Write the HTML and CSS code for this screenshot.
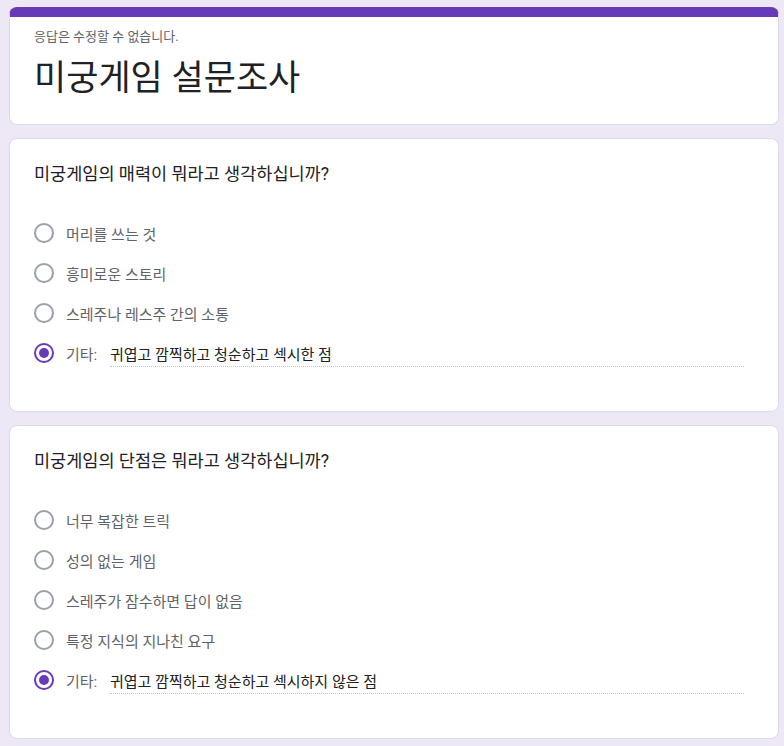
FILE: index.html
```html
<!DOCTYPE html>
<html lang="ko">

<head>
    <meta charset="UTF-8">
    <meta name="viewport" content="width=device-width, initial-scale=1.0">
    <title>미궁게임 설문조사</title>
    <link rel="stylesheet" href="styles.css">
</head>

<body>
    <main class="form">
        <section class="card head-card">
            <p class="notice">응답은 수정할 수 없습니다.</p>
            <h1>미궁게임 설문조사</h1>
        </section>

        <section class="card">
            <h2>미궁게임의 매력이 뭐라고 생각하십니까?</h2>
            <ul class="options">
                <li><span class="radio"></span>머리를 쓰는 것</li>
                <li><span class="radio"></span>흥미로운 스토리</li>
                <li><span class="radio"></span>스레주나 레스주 간의 소통</li>
                <li class="other"><span class="radio checked"></span><span class="other-label">기타:</span><span class="other-input">귀엽고 깜찍하고 청순하고 섹시한 점</span></li>
            </ul>
        </section>

        <section class="card">
            <h2>미궁게임의 단점은 뭐라고 생각하십니까?</h2>
            <ul class="options">
                <li><span class="radio"></span>너무 복잡한 트릭</li>
                <li><span class="radio"></span>성의 없는 게임</li>
                <li><span class="radio"></span>스레주가 잠수하면 답이 없음</li>
                <li><span class="radio"></span>특정 지식의 지나친 요구</li>
                <li class="other"><span class="radio checked"></span><span class="other-label">기타:</span><span class="other-input">귀엽고 깜찍하고 청순하고 섹시하지 않은 점</span></li>
            </ul>
        </section>
    </main>
</body>

</html>
```

FILE: styles.css
```css
body {
    margin: 0;
    padding: 0;
    background-color: #ede7f6;
    font-family: Roboto, "Noto Sans CJK KR", sans-serif;
    color: #202124;
}

.form {
    width: 770px;
    padding: 7px 0 0 9px;
    display: flex;
    flex-direction: column;
    gap: 13px;
}

.card {
    background-color: #fff;
    border: 1px solid #dadce0;
    border-radius: 8px;
    padding: 23px 24px 38px 24px;
}

.head-card {
    border-top: 10px solid #673ab7;
    padding-top: 12px;
    padding-bottom: 25px;
}

.notice {
    margin: 0;
    font-size: 13px;
    line-height: 16px;
    color: #5f6368;
}

.head-card h1 {
    margin: 14px 0 0 0;
    font-size: 35px;
    font-weight: 400;
    line-height: 40px;
}

.card h2 {
    margin: 0;
    font-size: 17.5px;
    font-weight: 400;
    line-height: 24px;
}

.options {
    list-style-type: none;
    margin: 27px 0 0 0;
    padding: 0;
}

.options li {
    display: flex;
    align-items: center;
    height: 40px;
    font-size: 15px;
    color: #5f6368;
}

.radio {
    box-sizing: border-box;
    width: 20px;
    height: 20px;
    border: 2px solid #9aa0a6;
    border-radius: 50%;
    margin-right: 12px;
    flex-shrink: 0;
    display: flex;
    align-items: center;
    justify-content: center;
}

.radio.checked {
    border-color: #673ab7;
}

.radio.checked::after {
    content: "";
    width: 10px;
    height: 10px;
    border-radius: 50%;
    background-color: #673ab7;
}

.other-label {
    width: 44px;
}

.other-input {
    flex: 1;
    margin-right: 10px;
    color: #202124;
    line-height: 22px;
    border-bottom: 1px dotted #c4c7c9;
    position: relative;
    top: 2px;
}
```
